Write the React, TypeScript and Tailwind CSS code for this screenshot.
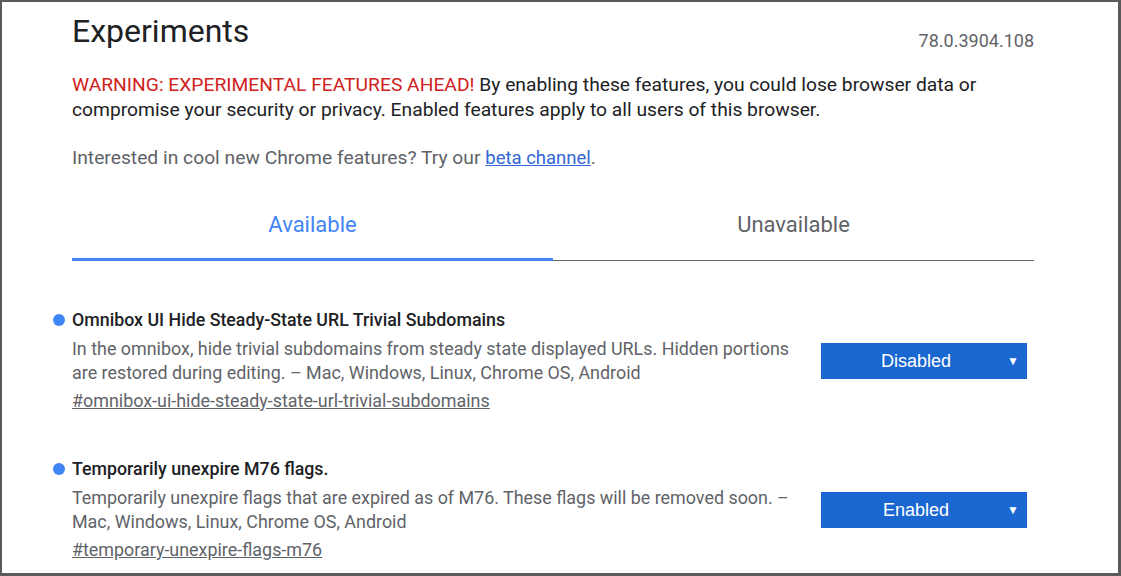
import React from 'react';

const flags = [
  {
    title: 'Omnibox UI Hide Steady-State URL Trivial Subdomains',
    desc: 'In the omnibox, hide trivial subdomains from steady state displayed URLs. Hidden portions are restored during editing. – Mac, Windows, Linux, Chrome OS, Android',
    link: '#omnibox-ui-hide-steady-state-url-trivial-subdomains',
    value: 'Disabled',
  },
  {
    title: 'Temporarily unexpire M76 flags.',
    desc: 'Temporarily unexpire flags that are expired as of M76. These flags will be removed soon. – Mac, Windows, Linux, Chrome OS, Android',
    link: '#temporary-unexpire-flags-m76',
    value: 'Enabled',
  },
];

const App: React.FC = () => {
  return (
    <div
      className="h-[576px] overflow-hidden bg-white border-t-2 border-l-2 border-r-[3px] border-b-[3px] border-[#5a5a5a] pl-[70px]"
      style={{ fontFamily: 'Roboto, "Noto Sans", sans-serif' }}
    >
      <div className="w-[962px]">
        {/* Header */}
        <div className="flex justify-between items-start mt-[9px]">
          <h1 className="text-[32px] leading-[40px] text-[#202124]">Experiments</h1>
          <span className="text-[18px] leading-[22px] text-[#5f6368] mt-[19px]">78.0.3904.108</span>
        </div>

        <p className="mt-[20px] text-[19.25px] leading-[25px] text-[#202124]">
          <span className="text-[#d0211d]">WARNING: EXPERIMENTAL FEATURES AHEAD!</span> By enabling these
          features, you could lose browser data or compromise your security or privacy. Enabled features
          apply to all users of this browser.
        </p>

        <p className="mt-[23px] text-[19.25px] leading-[25px] text-[#5f6368]">
          Interested in cool new Chrome features? Try our{' '}
          <a className="text-[#3367d6] underline text-[18.5px]">beta channel</a>.
        </p>

        {/* Tabs */}
        <div className="flex mt-[40px]">
          <div className="flex-1 text-center text-[22px] leading-[28px] text-[#4285f4] pb-[19px] border-b-[3px] border-[#4285f4]">
            Available
          </div>
          <div className="flex-1 text-center text-[22px] leading-[28px] text-[#5f6368] pb-[21px] border-b border-[#666]">
            Unavailable
          </div>
        </div>

        {/* Flags */}
        <div className="mt-[49px] flex flex-col gap-[46px]">
          {flags.map((f) => (
            <div key={f.link} className="flex">
              <div className="flex-1 pr-[20px]">
                <div className="flex items-center">
                  <span className="w-[12px] h-[12px] rounded-full bg-[#4285f4] -ml-[19px] mr-[7px] shrink-0" />
                  <h2 className="text-[17.8px] leading-[20px] font-medium text-[#202124]">{f.title}</h2>
                </div>
                <p className="mt-[7px] text-[17.9px] leading-[24px] text-[#5f6368]">{f.desc}</p>
                <a className="block mt-[4px] text-[17.9px] leading-[24px] text-[#5f6368] underline">{f.link}</a>
              </div>
              <div
                className="mt-[33px] mr-[7px] w-[206px] h-[36px] bg-[#1a67d2] text-white flex items-center shrink-0"
                style={{ fontFamily: '"Liberation Sans", Arial, sans-serif' }}
              >
                <span className="flex-1 text-center text-[18px] pl-[4px]">{f.value}</span>
                <span className="text-[12px] pr-[8px]">▼</span>
              </div>
            </div>
          ))}
        </div>
      </div>
    </div>
  );
};

export default App;
